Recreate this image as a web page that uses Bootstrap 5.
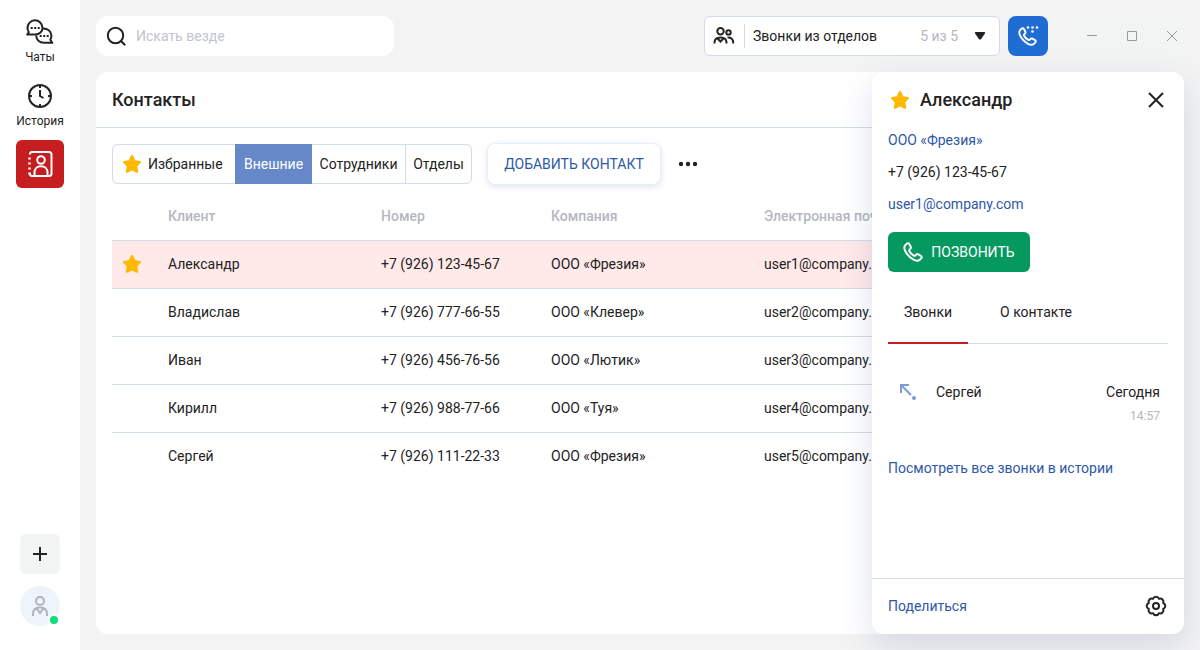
<!DOCTYPE html>
<html lang="ru">
<head>
<meta charset="utf-8">
<meta name="viewport" content="width=device-width, initial-scale=1">
<title>Контакты</title>
<link href="https://cdn.jsdelivr.net/npm/bootstrap@5.3.0/dist/css/bootstrap.min.css" rel="stylesheet">
<style>
:root { --ink: #232323; --line: #d2dced; --muted: #b4b8c1; --link: #2f58a6; --gold: #ffb800; }
body { font-family: Roboto, sans-serif; font-size: 14px; line-height: 24px; color: var(--ink); background: #f3f3f3; }
button, select, input { font: inherit; color: inherit; }
svg { display: block; flex: none; }
a { color: var(--link); text-decoration: none; }
a:hover { text-decoration: underline; }
.btn { --bs-btn-font-size: 14px; --bs-btn-line-height: 24px; --bs-btn-color: var(--ink); }
.bare { background: none; border: 0; padding: 0; }
.star { fill: var(--gold); }
.text-dim { color: var(--muted); }

.sidebar { width: 80px; }
.side-link { color: var(--ink); font-size: 12px; line-height: 16px; height: 49px; margin-bottom: 15px; }
.side-active { width: 48px; height: 48px; margin-top: -4px; border-radius: 6px; background: #c51d20; }
.add-btn { width: 40px; height: 40px; margin-bottom: 12px; border-radius: 6px; background: #f1f4f3; }
.avatar { width: 40px; height: 40px; background: #edf5fa; }
.status { width: 12px; height: 12px; right: 0; bottom: 0; border: 2px solid #fff; background: #0ddd7a; }

.topbar { height: 40px; }
.search { width: 298px; border-radius: 12px; }
.search input { background: none; border: 0; outline: 0; min-width: 0; }
.search input::placeholder { color: #bfc4cf; opacity: 1; }
.queue { width: 296px; padding: 0 9px 0 7px; border: 1px solid var(--line); border-radius: 6px; }
.queue select { appearance: none; background: none; border: 0; outline: 0; padding: 0; min-width: 0; }
.rule { width: 1px; height: 24px; background: var(--line); }
.dial { width: 40px; height: 40px; border-radius: 8px; background: #1f6dd3; }
.window-buttons { margin-right: -8px; background: #f1f4f3; }
.window-buttons button { width: 40px; height: 40px; color: #989b9b; }

.panel { border-radius: 12px; }
.panel-head { height: 56px; border-bottom: 1px solid var(--line); }
.title { font-size: 18px; line-height: 24px; font-weight: 500; }
.filters .btn { height: 40px; padding: 0 6px; border-color: var(--line); white-space: nowrap; --bs-btn-active-bg: #6788c8; --bs-btn-active-color: #fff; }
.filters .btn.active { border-color: #6788c8; }
.f-fav { width: 124px; gap: 6px; } .f-ext { width: 77px; } .f-staff { width: 95px; } .f-dep { width: 67px; }
.filters .f-fav { padding: 0 9px; }
.add-contact { width: 174px; height: 42px; margin-left: 15px; padding: 0; color: var(--link); background: #fff; border: 1px solid #e8eef7; border-radius: 8px; box-shadow: 0 2px 6px rgba(60,90,160,.16); }
.people { table-layout: fixed; width: 100%; margin: 0; }
.people th, .people td { height: 48px; padding: 0; vertical-align: middle; white-space: nowrap; }
.people th { font-weight: 500; color: var(--muted); }
.people td { border-top: 1px solid var(--line); }
.people .chosen td { background: #ffe9e9; }
.people .star { margin-left: 10px; }
.c-star { width: 56px; } .c-name { width: 213px; } .c-phone { width: 170px; }

.details { top: 0; right: 0; bottom: 0; width: 312px; border-radius: 12px; box-shadow: 0 12px 32px rgba(50,75,150,.16); }
.call-btn { width: 142px; height: 40px; border-radius: 6px; background: #05985f; color: #fff; }
.tabs { border-bottom: 1px solid var(--line); height: 56px; }
.tabs button { padding: 0 16px 6px; height: 56px; border-bottom: 2px solid transparent; }
.tabs .current { border-color: #c51d20; }
.time { font-size: 12px; }
.foot { height: 56px; padding-bottom: 1px; border-top: 1px solid var(--line); }
</style>
</head>
<body>
<svg class="d-none">
  <symbol id="star" viewBox="0 0 20 20"><path d="M10 1c.5 0 .8.3 1.1.8l2.1 4.5 4.9.7c1 .2 1.3 1.100.6 1.800l-3.400 3.500.8 5.300c.1 1-.7 1.600-1.600 1.200L10 16.500l-4.500 2.300c-.9.4-1.700-.2-1.600-1.200l.8-5.300L1.300 8.800C.6 8.100.9 7.200 1.900 7l4.900-.7 2.100-4.500C9.200 1.300 9.500 1 10 1Z"/></symbol>
  <symbol id="handset" viewBox="0 0 20 20"><path fill="none" stroke="currentColor" stroke-width="2" stroke-linejoin="round" d="M1.500 4.600C2 3.400 3.100 1.900 4.300 1.400c.8-.3 1.500 0 1.900.7L7.700 4.800c.4.8.2 1.500-.4 2.100l-.8.8c-.4.5-.4 1-.1 1.500 1 1.800 2.600 3.400 4.400 4.400.5.3 1 .3 1.500-.1l.8-.8c.6-.6 1.300-.8 2.100-.4l2.700 1.500c.7.400 1 1.100.7 1.900-.5 1.200-2 2.300-3.200 2.800-1.500.5-3.200.1-4.800-.8C6.500 15.300 3.500 12 2 8.600 1.400 7.200 1.100 5.900 1.500 4.600Z"/></symbol>
</svg>
<div class="d-flex min-vh-100">
  <nav class="sidebar bg-white d-flex flex-column align-items-center flex-shrink-0 pt-3">
    <a href="#" class="side-link d-flex flex-column align-items-center justify-content-between">
      <svg width="32" height="32" viewBox="0 0 32 32" fill="none" stroke="#232323" stroke-width="2">
        <path stroke-linejoin="round" d="M3.200 18.600h7.800c4.700 0 7.500-3.200 7.500-6.900A7.500 7.500 0 0 0 3.500 12c0 1.500.5 3 1.300 4.100Z"/>
        <path stroke-linejoin="round" d="M18.500 12.500c4.900-.4 8.900 2.900 8.900 7.200 0 1.500-.4 2.800-1.100 4l2 3.100h-8.300c-4.500 0-7.600-2.900-7.900-7.400"/>
        <path stroke-dasharray="2 1.500" d="M6.700 12h9M15.700 20h9"/>
      </svg>
      <span>Чаты</span>
    </a>
    <a href="#" class="side-link d-flex flex-column align-items-center justify-content-between">
      <svg width="32" height="32" viewBox="0 0 32 32" fill="none" stroke="#232323" stroke-width="2"><circle cx="16" cy="16" r="11"/><path d="M16 5v3M16 24v3M5 16h3M24 16h3M16 10v6l3.500 2"/></svg>
      <span>История</span>
    </a>
    <a href="#" aria-label="Контакты" class="side-active d-flex align-items-center justify-content-center">
      <svg width="32" height="32" viewBox="0 0 32 32" fill="none" stroke="#fff" stroke-width="2"><path d="M6 6.500V6q0-2 2-2h17q2.500 0 2.500 2.500v19q0 2.500-2.500 2.500H8q-2 0-2-2v-.5"/><path stroke-dasharray="2 3" d="M5.500 9.500v18" stroke-width="2.500"/><circle cx="17" cy="12" r="3.800"/><path d="M10.500 28v-3.500c0-3.800 2.700-6.300 6.500-6.300s6.500 2.500 6.500 6.300V28"/></svg>
    </a>
    <button type="button" aria-label="Добавить" class="bare add-btn mt-auto d-flex align-items-center justify-content-center">
      <svg width="20" height="20" viewBox="0 0 20 20" stroke="#232323" stroke-width="2"><path d="M3 10h14M10 3v14"/></svg>
    </button>
    <a href="#" aria-label="Профиль" class="avatar rounded-circle position-relative d-flex align-items-center justify-content-center mb-4">
      <svg width="20" height="24" viewBox="0 0 20 24" fill="none" stroke="#b0b4be" stroke-width="2"><circle cx="10" cy="7" r="4"/><path d="M3 22v-2c0-4.500 3-6.500 7-6.500s7 2 7 6.500v2M6.500 14.300 10 19l3.500-4.700"/></svg>
      <span class="status position-absolute rounded-circle"></span>
    </a>
  </nav>

  <div class="d-flex flex-column flex-grow-1 p-3 gap-3 overflow-hidden">
    <header class="topbar d-flex align-items-center">
      <label class="search bg-white h-100 d-flex align-items-center gap-2 px-2">
        <svg width="24" height="24" viewBox="0 0 24 24" fill="none" stroke="#232323" stroke-width="2"><circle cx="11.500" cy="11.500" r="7.700"/><path d="m16.500 16.500 4.700 4.700"/></svg>
        <input class="flex-grow-1 p-0" type="search" placeholder="Искать везде" aria-label="Искать везде">
      </label>
      <label class="queue bg-white h-100 d-flex align-items-center ms-auto me-2">
        <svg width="24" height="24" viewBox="0 0 24 24" fill="none" stroke="#232323" stroke-width="2"><circle cx="8.500" cy="7.300" r="3.200"/><circle cx="16.500" cy="8.400" r="2.200"/><path d="M2.500 19.500v-1c0-3.300 2.500-5 6-5s6 1.700 6 5v1M5.500 14.500 8.500 17.500l3-3M15.500 13.500c3.700-.2 5.700 1.700 5.700 5v1"/></svg>
        <span class="rule ms-2 me-2 flex-shrink-0"></span>
        <select class="flex-grow-1" aria-label="Звонки"><option>Звонки из отделов</option></select>
        <span class="text-dim me-3">5 из 5</span>
        <svg width="12" height="8" viewBox="0 0 12 8" class="me-1"><path fill="#232323" d="M1.500 0h9q1 .4.400 1.400L7 7.200q-1 .8-2 0L1.100 1.400Q.5.400 1.500 0Z"/></svg>
      </label>
      <button type="button" aria-label="Набрать номер" class="bare dial text-white d-flex align-items-center justify-content-center me-4">
        <svg width="22" height="22" viewBox="0 0 22 22"><use href="#handset" x="1" y="2" width="19" height="19"/><g fill="#fff"><circle cx="11" cy="2.500" r="1.300"/><circle cx="15.500" cy="2.500" r="1.300"/><circle cx="20" cy="2.500" r="1.300"/><circle cx="15.500" cy="6.500" r="1.300"/></g></svg>
      </button>
      <div class="window-buttons d-flex">
        <button type="button" class="bare d-flex align-items-center justify-content-center" aria-label="Свернуть"><svg width="10" height="10" stroke="currentColor"><path d="M0 4.500h10"/></svg></button>
        <button type="button" class="bare d-flex align-items-center justify-content-center" aria-label="Развернуть"><svg width="10" height="10" fill="none" stroke="currentColor"><path d="M.5.500h9v9h-9Z"/></svg></button>
        <button type="button" class="bare d-flex align-items-center justify-content-center" aria-label="Закрыть"><svg width="10" height="10" stroke="currentColor"><path d="m0 0 10 10M10 0 0 10"/></svg></button>
      </div>
    </header>

    <main class="panel bg-white flex-grow-1 position-relative">
      <div class="panel-head d-flex align-items-center px-3"><h1 class="title m-0">Контакты</h1></div>
      <div class="px-3 pt-3">
        <div class="d-flex align-items-center mb-2 topbar">
          <div class="btn-group filters" role="group" aria-label="Фильтр">
            <button type="button" class="btn f-fav d-flex align-items-center"><svg class="star" width="20" height="20"><use href="#star"/></svg>Избранные</button>
            <button type="button" class="btn f-ext active" aria-pressed="true">Внешние</button>
            <button type="button" class="btn f-staff">Сотрудники</button>
            <button type="button" class="btn f-dep">Отделы</button>
          </div>
          <button type="button" class="btn add-contact">ДОБАВИТЬ КОНТАКТ</button>
          <button type="button" class="bare ms-3" aria-label="Ещё"><svg width="22" height="24" viewBox="0 0 22 24" fill="#232323"><circle cx="4" cy="12" r="2.200"/><circle cx="11" cy="12" r="2.200"/><circle cx="18" cy="12" r="2.200"/></svg></button>
        </div>
        <table class="people">
          <thead><tr><th class="c-star"></th><th class="c-name">Клиент</th><th class="c-phone">Номер</th><th class="c-name">Компания</th><th>Электронная почта</th></tr></thead>
          <tbody>
            <tr class="chosen"><td><svg class="star" width="20" height="20"><use href="#star"/></svg></td><td>Александр</td><td>+7 (926) 123-45-67</td><td>ООО «Фрезия»</td><td>user1@company.com</td></tr>
            <tr><td></td><td>Владислав</td><td>+7 (926) 777-66-55</td><td>ООО «Клевер»</td><td>user2@company.com</td></tr>
            <tr><td></td><td>Иван</td><td>+7 (926) 456-76-56</td><td>ООО «Лютик»</td><td>user3@company.com</td></tr>
            <tr><td></td><td>Кирилл</td><td>+7 (926) 988-77-66</td><td>ООО «Туя»</td><td>user4@company.com</td></tr>
            <tr><td></td><td>Сергей</td><td>+7 (926) 111-22-33</td><td>ООО «Фрезия»</td><td>user5@company.com</td></tr>
          </tbody>
        </table>
      </div>

      <aside class="details position-absolute bg-white d-flex flex-column">
        <div class="px-3 pt-3 flex-grow-1">
          <div class="d-flex align-items-center gap-2 mb-3">
            <svg class="star" width="24" height="24" viewBox="-2 -2 24 24"><use href="#star" width="20" height="20"/></svg>
            <h2 class="title m-0">Александр</h2>
            <button type="button" class="bare ms-auto" aria-label="Закрыть"><svg width="24" height="24" stroke="#232323" stroke-width="2"><path d="m5 5 14 14M19 5 5 19"/></svg></button>
          </div>
          <div class="d-flex flex-column align-items-start gap-2">
            <a href="#">ООО «Фрезия»</a>
            <span>+7 (926) 123-45-67</span>
            <a href="#">user1@company.com</a>
          </div>
          <button type="button" class="bare call-btn mt-3 mb-3 d-flex align-items-center justify-content-center gap-2"><svg width="20" height="20"><use href="#handset"/></svg>ПОЗВОНИТЬ</button>
          <div class="tabs d-flex" role="tablist">
            <button type="button" role="tab" aria-selected="true" class="bare current">Звонки</button>
            <button type="button" role="tab" aria-selected="false" class="bare ms-3">О контакте</button>
          </div>
          <div class="d-flex px-2 mt-4 pt-2">
            <svg class="me-3 mt-1" width="24" height="24" viewBox="0 0 24 24" fill="none" stroke="#7d9bd6" stroke-width="2"><path d="M5 13V5h8M5 5l10 10"/><circle cx="18" cy="18" r="2" fill="#7d9bd6" stroke="none"/></svg>
            <span class="mt-1">Сергей</span>
            <div class="ms-auto mt-1 text-end"><div>Сегодня</div><div class="time text-dim">14:57</div></div>
          </div>
          <a href="#" class="d-inline-block mt-4 pt-1">Посмотреть все звонки в истории</a>
        </div>
        <div class="foot d-flex align-items-center justify-content-between px-3">
          <a href="#">Поделиться</a>
          <button type="button" class="bare" aria-label="Настройки"><svg width="24" height="24" viewBox="0 0 24 24" fill="none" stroke="#232323" stroke-width="2" stroke-linejoin="round"><path d="M19.200 9A3.200 3.200 0 0 1 19.200 15A3.200 3.200 0 0 1 15 19.200A3.200 3.200 0 0 1 9 19.200A3.200 3.200 0 0 1 4.800 15A3.200 3.200 0 0 1 4.800 9A3.200 3.200 0 0 1 9 4.800A3.200 3.200 0 0 1 15 4.800A3.200 3.200 0 0 1 19.200 9Z"/><circle cx="12" cy="12" r="3"/></svg></button>
        </div>
      </aside>
    </main>
  </div>
</div>
<script src="https://cdn.jsdelivr.net/npm/bootstrap@5.3.0/dist/js/bootstrap.bundle.min.js"></script>
</body>
</html>
